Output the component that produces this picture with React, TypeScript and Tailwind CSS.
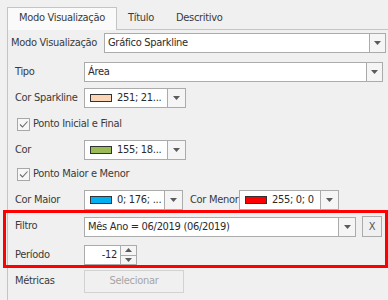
import React from 'react';

const BORDER = 'border-[#ababab]';

function Arrow({ up = false }: { up?: boolean }) {
  return (
    <svg width="7" height="4" viewBox="0 0 7 4" aria-hidden="true">
      <path d={up ? 'M0 4h7L3.5 0z' : 'M0 0h7L3.5 4z'} fill="#5b5b5b" />
    </svg>
  );
}

function DropButton({ className = 'w-[16px]' }: { className?: string }) {
  return (
    <div className={`${className} h-full flex items-center justify-center border-l ${BORDER} bg-[#f5f5f5]`}>
      <Arrow />
    </div>
  );
}

function Combo({ text, className }: { text: string; className: string }) {
  return (
    <div className={`flex h-[20px] border ${BORDER} bg-white ${className}`}>
      <span className="flex-1 pl-[3px] leading-[18px] whitespace-nowrap overflow-hidden text-[#2b2b2b]">{text}</span>
      <DropButton />
    </div>
  );
}

function ColorCombo({ text, color, className }: { text: string; color: string; className: string }) {
  return (
    <div className={`flex h-[20px] border ${BORDER} bg-white ${className}`}>
      <div className="flex-1 flex items-center pl-[5px] gap-[5px] overflow-hidden">
        <span className="w-[22px] h-[8px] border border-[#333] shrink-0" style={{ backgroundColor: color }} />
        <span className="whitespace-nowrap text-[#2b2b2b]">{text}</span>
      </div>
      <DropButton className="w-[18px]" />
    </div>
  );
}

function Check({ label }: { label: string }) {
  return (
    <div className="flex items-center gap-[3px] pl-[9px] h-[13px]">
      <span className="w-[13px] h-[13px] border border-[#a8a8a8] bg-[#f7f7f7] flex items-center justify-center">
        <svg width="11" height="11" viewBox="0 0 11 11" aria-hidden="true">
          <path d="M2 5.5L4.5 8L9.5 2.5" fill="none" stroke="#6a6a6a" strokeWidth="1.1" />
        </svg>
      </span>
      <span>{label}</span>
    </div>
  );
}

function Label({ children, className = 'w-[76px] pl-[7px]' }: { children: React.ReactNode; className?: string }) {
  return <span className={`${className} shrink-0 whitespace-nowrap`}>{children}</span>;
}

export default function App() {
  return (
    <div className="w-[388px] h-[300px] overflow-hidden bg-[#f0f0f0] text-[11px] tracking-[-0.3px] text-[#3a3a3a] font-['DejaVu_Sans_Condensed','Liberation_Sans',sans-serif]">
      {/* tabs */}
      <div className="flex items-end h-[29px] pt-[7px] pl-[7px]">
        <div className="relative z-10 -mb-px h-[23px] w-[110px] border border-b-0 border-[#c4c4c4] bg-[#fafafa] flex items-center justify-center pb-px">
          Modo Visualização
        </div>
        <div className="h-[22px] flex items-center pl-[11px]">Título</div>
        <div className="h-[22px] flex items-center pl-[22px]">Descritivo</div>
      </div>

      {/* panel */}
      <div className="ml-[7px] h-[280px] border-l border-t border-[#c4c4c4]">
        <div className="flex items-center mt-[3px]">
          <Label className="w-[96px] pl-[3px]">Modo Visualização</Label>
          <Combo text="Gráfico Sparkline" className="w-[282px]" />
        </div>

        <div className="flex items-center mt-[9px]">
          <Label>Tipo</Label>
          <Combo text="Área" className="w-[299px]" />
        </div>

        <div className="flex items-center mt-[6px]">
          <Label>Cor Sparkline</Label>
          <ColorCombo text="251; 21..." color="#fbd5b5" className="w-[102px]" />
        </div>

        <div className="mt-[10px]">
          <Check label="Ponto Inicial e Final" />
        </div>

        <div className="flex items-center mt-[9px]">
          <Label>Cor</Label>
          <ColorCombo text="155; 18..." color="#9bbb59" className="w-[102px]" />
        </div>

        <div className="mt-[8px]">
          <Check label="Ponto Maior e Menor" />
        </div>

        <div className="flex items-center mt-[9px]">
          <Label>Cor Maior</Label>
          <ColorCombo text="0; 176; ..." color="#00b0f0" className="w-[99px]" />
          <Label className="w-[56px] pl-[7px]">Cor Menor</Label>
          <ColorCombo text="255; 0; 0" color="#ff0000" className="w-[100px]" />
        </div>

        {/* highlighted filter block */}
        <div className="-ml-[5px] w-[385px] border-[3px] border-[#ff0000] pt-[3px]">
          <div className="flex items-center">
            <Label className="w-[78px] pl-[9px]">Filtro</Label>
            <div className={`flex h-[20px] w-[272px] border ${BORDER} bg-white`}>
              <span className="flex-1 pl-[3px] leading-[18px] whitespace-nowrap text-[#2b2b2b]">Mês Ano = 06/2019 (06/2019)</span>
              <DropButton className="w-[17px]" />
            </div>
            <button className={`ml-[6px] w-[20px] h-[21px] border ${BORDER} bg-[#f0f0f0] text-[#555] text-[11px] leading-none`}>X</button>
          </div>
          <div className="flex items-center mt-[8px]">
            <Label className="w-[78px] pl-[9px]">Período</Label>
            <div className={`flex h-[20px] w-[53px] border ${BORDER} bg-white`}>
              <span className="flex-1 pr-[3px] text-right leading-[18px] text-[#2b2b2b]">-12</span>
              <div className={`w-[16px] flex flex-col border-l ${BORDER} bg-[#f5f5f5]`}>
                <div className={`flex-1 flex items-center justify-center border-b ${BORDER}`}>
                  <Arrow up />
                </div>
                <div className="flex-1 flex items-center justify-center">
                  <Arrow />
                </div>
              </div>
            </div>
          </div>
        </div>

        <div className="flex items-center mt-[2px]">
          <Label>Métricas</Label>
          <button disabled className="w-[100px] h-[23px] border border-[#d2d2d2] bg-[#f0f0f0] text-[#a5a5a5] text-[11px]">
            Selecionar
          </button>
        </div>
      </div>
    </div>
  );
}
